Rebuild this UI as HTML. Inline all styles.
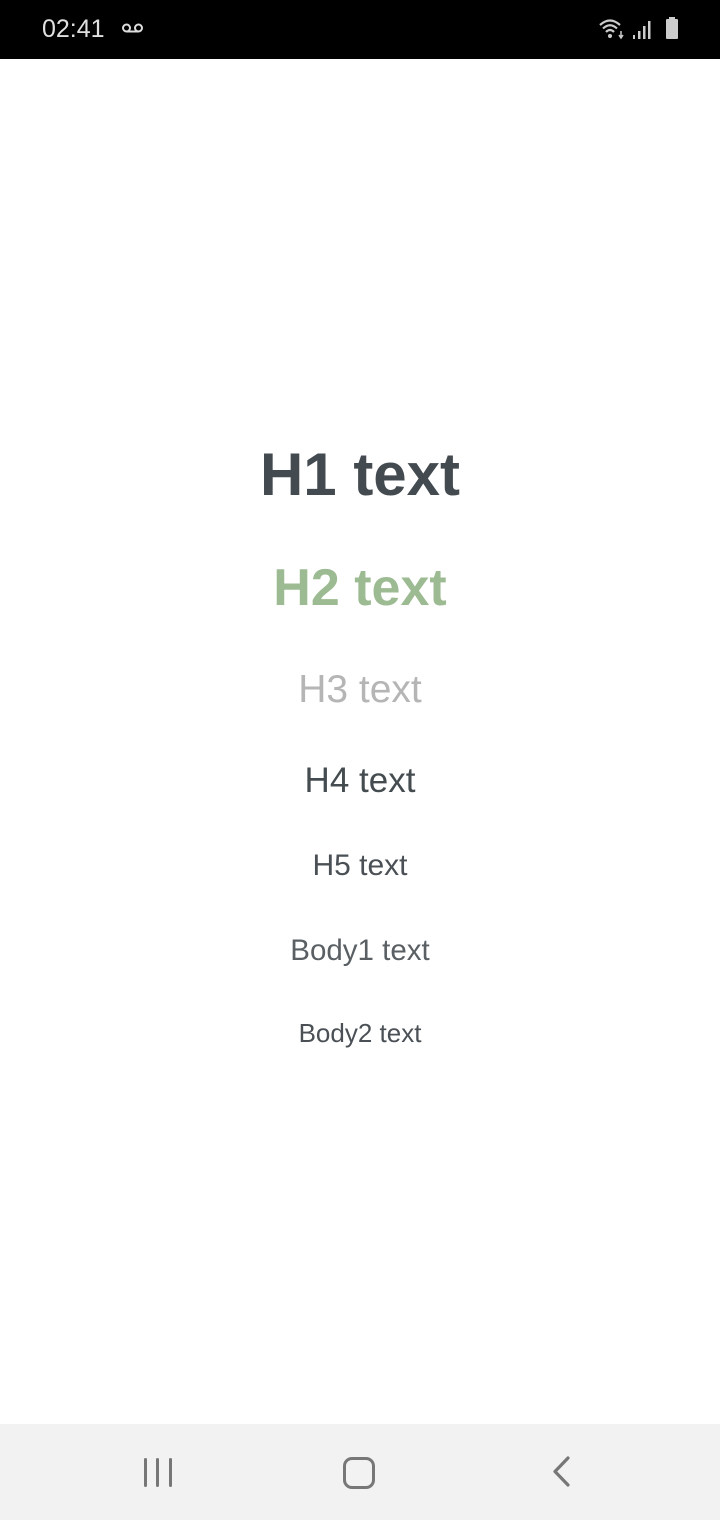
<!DOCTYPE html>
<html><head><meta charset="utf-8"><style>
*{margin:0;padding:0}
body{width:720px;height:1520px;position:relative;background:#fff;font-family:"Liberation Sans",sans-serif;overflow:hidden}
.sb{position:absolute;top:0;left:0;width:720px;height:59px;background:#000}
.t{position:absolute;left:0;width:720px;text-align:center;line-height:1;white-space:nowrap}
.nav{position:absolute;top:1424px;left:0;width:720px;height:96px;background:#f2f2f2}
</style></head><body>
<div class="sb">
<div style="position:absolute;left:42px;top:15px;color:#e0e0e0;font-size:25px;">02:41</div>
<svg style="position:absolute;left:121px;top:22px" width="24" height="12" viewBox="0 0 24 12"><circle cx="5.5" cy="6" r="3.5" fill="none" stroke="#ddd" stroke-width="2"/><circle cx="17.5" cy="6" r="3.5" fill="none" stroke="#ddd" stroke-width="2"/><line x1="5.5" y1="9.5" x2="17.5" y2="9.5" stroke="#ddd" stroke-width="2"/></svg>
<svg style="position:absolute;left:598px;top:18px" width="28" height="22" viewBox="0 0 28 22"><path d="M2 7 Q12 -2 22 7" fill="none" stroke="#ccc" stroke-width="2.2"/><path d="M5 10.5 Q12 4 19 10.5" fill="none" stroke="#ccc" stroke-width="2.2"/><path d="M8 14 Q12 10 16 14" fill="none" stroke="#ccc" stroke-width="2.2"/><circle cx="12" cy="18" r="2" fill="#ccc"/><path d="M23 13v7M21 17l2 3 2-3" stroke="#ccc" stroke-width="1.5" fill="none"/></svg>
<svg style="position:absolute;left:632px;top:20px" width="20" height="20" viewBox="0 0 20 20"><rect x="1" y="15" width="2" height="4" fill="#ccc"/><rect x="6" y="11" width="2.5" height="8" fill="#ccc"/><rect x="11" y="6" width="2.5" height="13" fill="#ccc"/><rect x="16" y="1" width="2.5" height="18" fill="#ccc"/></svg>
<div style="position:absolute;left:666px;top:19px;width:12px;height:20px;background:#ccc;border-radius:1px"></div>
<div style="position:absolute;left:669px;top:17px;width:6px;height:3px;background:#ccc"></div>
</div>
<div class="t" style="top:445px;font-size:60px;font-weight:bold;color:#434a50">H1 text</div>
<div class="t" style="top:562px;font-size:52px;font-weight:bold;color:#9dbb92">H2 text</div>
<div class="t" style="top:670px;font-size:39px;color:#b5b5b5">H3 text</div>
<div class="t" style="top:763px;font-size:35px;color:#444c50">H4 text</div>
<div class="t" style="top:851px;font-size:30px;color:#4a5055">H5 text</div>
<div class="t" style="top:936px;font-size:29.5px;color:#5a5f63">Body1 text</div>
<div class="t" style="top:1020px;font-size:26px;color:#4a5055">Body2 text</div>
<div class="nav">
<div style="position:absolute;left:144px;top:34px;width:3px;height:29px;background:#777;border-radius:2px"></div>
<div style="position:absolute;left:156px;top:34px;width:3px;height:29px;background:#777;border-radius:2px"></div>
<div style="position:absolute;left:169px;top:34px;width:3px;height:29px;background:#777;border-radius:2px"></div>
<div style="position:absolute;left:343px;top:33px;width:26px;height:26px;border:3px solid #777;border-radius:9px"></div>
<svg style="position:absolute;left:550px;top:32px" width="22" height="32" viewBox="0 0 22 32"><path d="M18 2 L5 15.5 L18 29" fill="none" stroke="#777" stroke-width="3.2" stroke-linecap="round" stroke-linejoin="round"/></svg>
</div>
</body></html>
